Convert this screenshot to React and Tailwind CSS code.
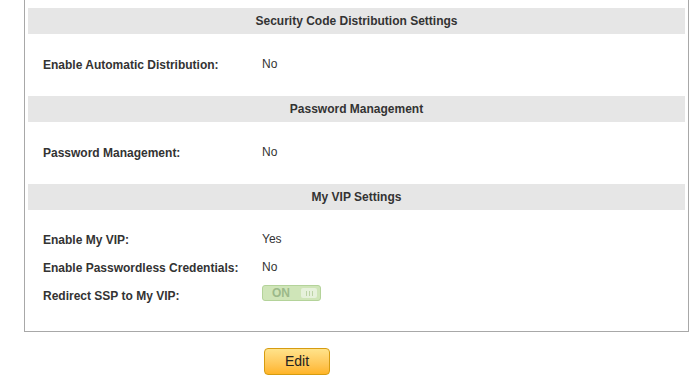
export default function App() {
  const Header = ({ children }) => (
    <div className="h-[26px] bg-[#e6e6e6] flex items-center justify-center font-bold text-[12px] text-[#333]">
      {children}
    </div>
  );
  const Row = ({ label, children, h = "h-[28px]" }) => (
    <div className={`flex items-center pl-[15px] ${h}`}>
      <div className="w-[219px] font-bold">{label}</div>
      <div className="mb-[3px]">{children}</div>
    </div>
  );
  return (
    <div className="w-[699px] h-[386px] bg-white font-['Liberation_Sans',Arial,sans-serif] text-[12px] text-[#333] overflow-hidden">
      <div className="ml-[24px] w-[665px] border-x border-b border-[#a8a8a8] px-[3px] pt-[8px] pb-[21px]">
        <Header>Security Code Distribution Settings</Header>
        <Row label="Enable Automatic Distribution:" h="h-[62px]">No</Row>
        <Header>Password Management</Header>
        <Row label="Password Management:" h="h-[62px]">No</Row>
        <Header>My VIP Settings</Header>
        <div className="pt-[16px]">
          <Row label="Enable My VIP:">Yes</Row>
          <Row label="Enable Passwordless Credentials:">No</Row>
          <div className="flex items-center pl-[15px] h-[28px]">
            <div className="w-[219px] font-bold">Redirect SSP to My VIP:</div>
            <div className="mb-[6px] w-[59px] h-[16px] rounded-[3px] border border-[#b4d39a] bg-[#cfe5b8] flex items-center pl-[9px] pr-[3px] justify-between">
              <span className="font-bold text-[12px] text-[#9cb98a] leading-none">ON</span>
              <span className="w-[16px] h-[10px] rounded-[2px] bg-[#e6f1db] flex items-center justify-center gap-[2px]">
                <span className="w-px h-[5px] bg-[#bcd3a6]"></span>
                <span className="w-px h-[5px] bg-[#bcd3a6]"></span>
                <span className="w-px h-[5px] bg-[#bcd3a6]"></span>
              </span>
            </div>
          </div>
        </div>
      </div>
      <div className="mt-[16px] ml-[264px]">
        <button className="w-[66px] h-[27px] rounded-[4px] border border-[#d69c10] bg-gradient-to-b from-[#ffe38a] to-[#ffb424] text-[14px] text-[#222] flex items-center justify-center">
          Edit
        </button>
      </div>
    </div>
  );
}
